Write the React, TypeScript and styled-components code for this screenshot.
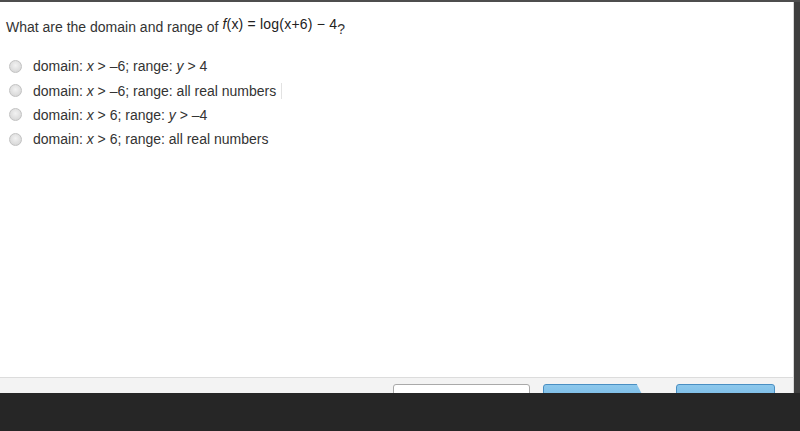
import React from 'react';
import styled, { createGlobalStyle } from 'styled-components';

const GlobalStyle = createGlobalStyle`
  html, body {
    margin: 0;
    padding: 0;
    background: #262626;
  }
  body {
    font-family: 'Liberation Sans', Arial, sans-serif;
  }
`;

const Screen = styled.div`
  width: 800px;
  height: 431px;
  display: flex;
  flex-direction: column;
  overflow: hidden;
`;

const Window = styled.div`
  height: 393px;
  display: flex;
  border-top: 2px solid #4e4e4e;
  box-sizing: border-box;
`;

const Panel = styled.div`
  flex: 1;
  display: flex;
  flex-direction: column;
  background: #ffffff;
  border-right: 1px solid #d6d6d6;
`;

const SideStrip = styled.div`
  width: 6px;
  background: #3e3e3e;
`;

const Body = styled.div`
  flex: 1;
  padding: 15px 0 0 6px;
`;

const Question = styled.div`
  font-size: 14px;
  line-height: 20px;
  color: #333;
  display: flex;
  align-items: center;
  white-space: pre;
`;

const Formula = styled.span`
  font-family: 'Liberation Sans', Arial, sans-serif;
  font-size: 14px;
  color: #222;
  position: relative;
  top: -3px;
  margin-left: 4px;
  letter-spacing: 0.2px;
`;

const Mark = styled.span`
  position: relative;
  top: 2px;
  font-size: 14px;
  color: #333;
`;

const Options = styled.ul`
  list-style: none;
  margin: 17px 0 0 0;
  padding: 0;
`;

const Option = styled.li`
  height: 24.4px;
  display: flex;
  align-items: center;
  gap: 11px;
  padding-left: 3px;
  font-size: 14px;
  color: #333;
  white-space: pre;
`;

const Radio = styled.span`
  width: 11px;
  height: 11px;
  border-radius: 50%;
  border: 1px solid #c2c2c2;
  background: radial-gradient(circle at 50% 40%, #f2f2f2 0%, #dedede 60%, #cfcfcf 100%);
  flex-shrink: 0;
`;

const Label = styled.span<{ $marked?: boolean }>`
  padding-right: ${(p) => (p.$marked ? '5px' : '0')};
  border-right: ${(p) => (p.$marked ? '1px solid #e2e2e2' : 'none')};
  line-height: 16px;
`;

const Footer = styled.div`
  height: 16px;
  border-top: 1px solid #dcdcdc;
  background: #f3f3f3;
  display: flex;
  align-items: flex-start;
  padding-top: 6px;
  box-sizing: border-box;
  overflow: hidden;
`;

const ExitButton = styled.button`
  margin-left: 393px;
  width: 137px;
  height: 30px;
  border: 1px solid #a9a9a9;
  border-radius: 3px;
  background: #ffffff;
  font-family: 'Liberation Sans', Arial, sans-serif;
  font-size: 13px;
  font-weight: bold;
  color: #222;
  padding: 5px 0 0;
  flex-shrink: 0;
`;

const BlueButton = styled.button<{ $arrow?: boolean }>`
  margin-left: ${(p) => (p.$arrow ? '13px' : '30px')};
  width: ${(p) => (p.$arrow ? '103px' : '99px')};
  height: 30px;
  border: 1px solid #4a8fc2;
  border-radius: 3px;
  background: linear-gradient(#8dc8ec, #64ade0);
  clip-path: ${(p) =>
    p.$arrow ? 'polygon(0 0, 91% 0, 100% 60%, 100% 100%, 0 100%)' : 'none'};
  font-family: 'Liberation Sans', Arial, sans-serif;
  font-size: 13px;
  font-weight: bold;
  color: #d9ecf8;
  padding: 5px 0 0;
  flex-shrink: 0;
`;

const Taskbar = styled.div`
  flex: 1;
  background: #262626;
`;

const options = [
  { x: 'x', dom: ' > –6; range: ', y: 'y', rest: ' > 4' },
  { x: 'x', dom: ' > –6; range: all real numbers', marked: true },
  { x: 'x', dom: ' > 6; range: ', y: 'y', rest: ' > –4' },
  { x: 'x', dom: ' > 6; range: all real numbers' },
];

const App: React.FC = () => {
  return (
    <Screen>
      <GlobalStyle />
      <Window>
        <Panel>
          <Body>
            <Question>
              What are the domain and range of
              <Formula>
                <i>f</i>(x) = log(x+6) − 4
              </Formula>
              <Mark>?</Mark>
            </Question>
            <Options>
              {options.map((o, i) => (
                <Option key={i}>
                  <Radio />
                  <Label $marked={o.marked}>
                    domain: <i>{o.x}</i>
                    {o.dom}
                    {o.y && <i>{o.y}</i>}
                    {o.rest}
                  </Label>
                </Option>
              ))}
            </Options>
          </Body>
          <Footer>
            <ExitButton>Save and Exit</ExitButton>
            <BlueButton $arrow>Next</BlueButton>
            <BlueButton>Submit</BlueButton>
          </Footer>
        </Panel>
        <SideStrip />
      </Window>
      <Taskbar />
    </Screen>
  );
};

export default App;
